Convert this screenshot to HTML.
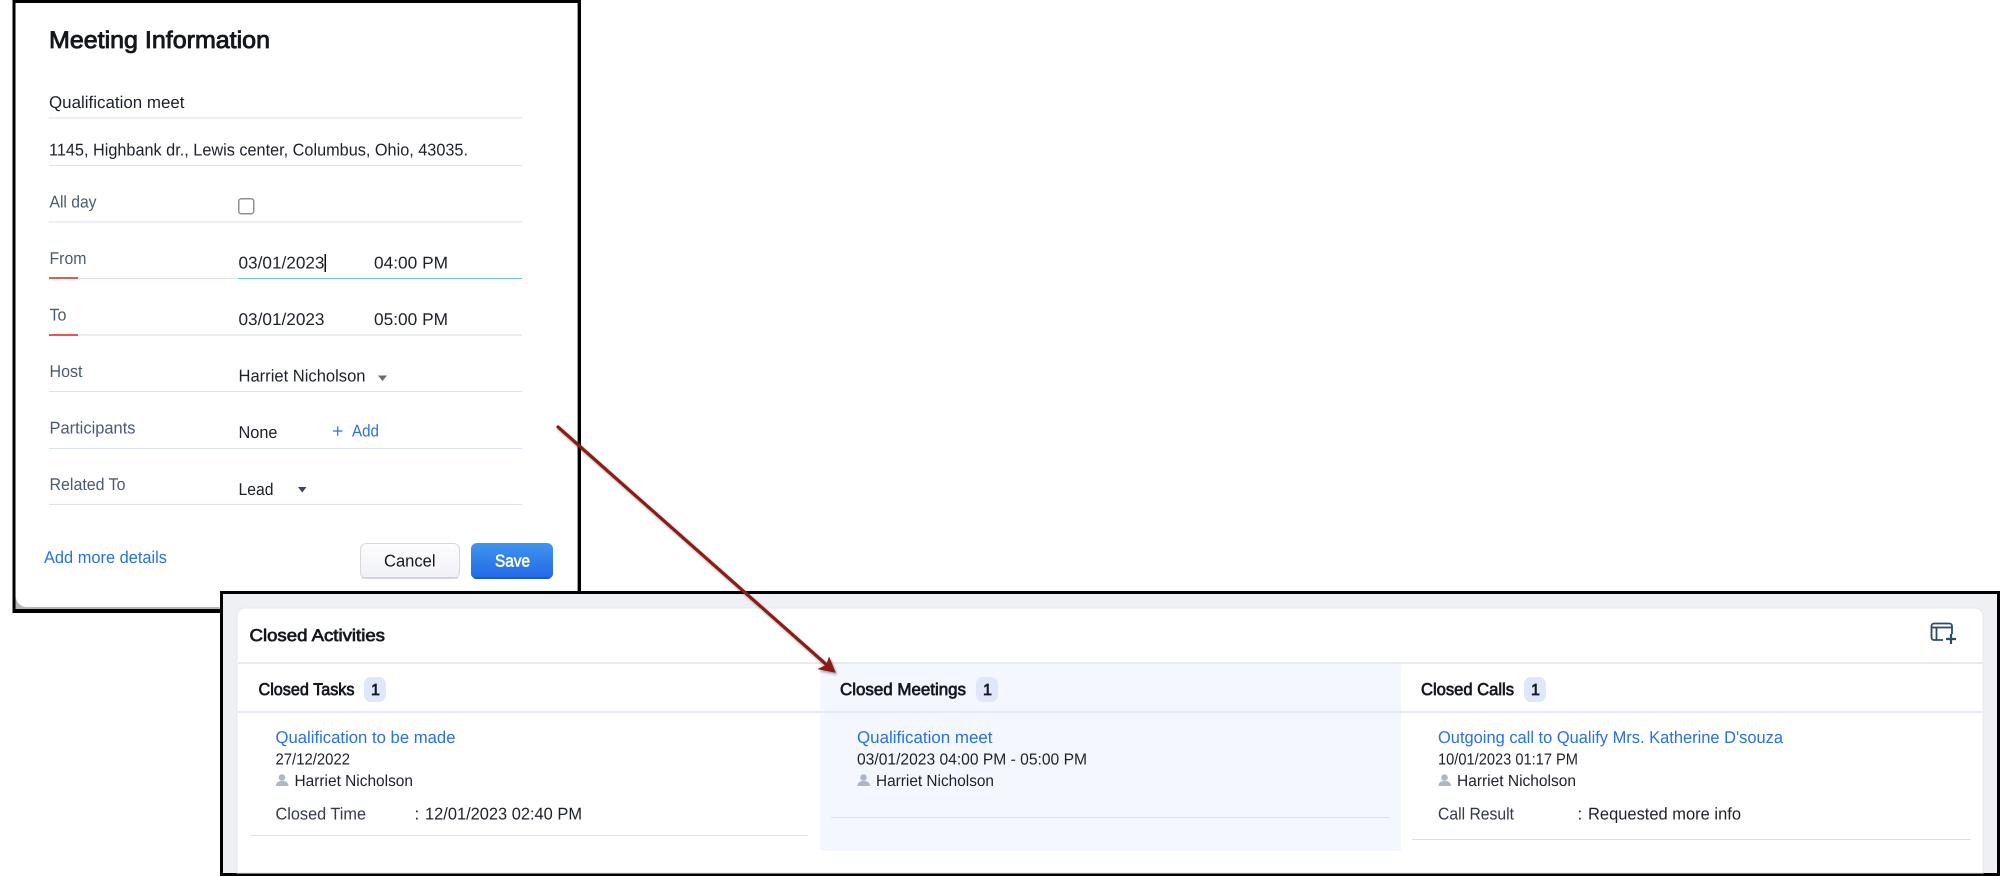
<!DOCTYPE html>
<html lang="en">
<head>
<meta charset="utf-8">
<title>Meeting Information and Closed Activities</title>
<style>
html,body{margin:0;padding:0;background:#fff;width:2000px;height:876px;overflow:hidden}
svg{display:block}
text{font-family:"Liberation Sans",sans-serif;font-size:17px;fill:#1d2129;text-rendering:geometricPrecision}
.s{font-size:16px}
.l{fill:#4b5a75}
.b{fill:#2a70e8}
.h{fill:#14171d;stroke:#14171d;stroke-width:.7px}
</style>
</head>
<body>
<svg width="2000" height="876" viewBox="0 0 2000 876" xmlns="http://www.w3.org/2000/svg">
<defs>
<linearGradient id="gs" x1="0" y1="0" x2="0" y2="1"><stop offset="0" stop-color="#3f95ee"/><stop offset="1" stop-color="#2468e6"/></linearGradient>
<linearGradient id="gc" x1="0" y1="0" x2="0" y2="1"><stop offset="0" stop-color="#fdfdfe"/><stop offset="1" stop-color="#f0f1f6"/></linearGradient>
<filter id="sh" x="-10%" y="-10%" width="120%" height="120%"><feDropShadow dx="1.500" dy="2" stdDeviation="1.200" flood-color="#000" flood-opacity=".35"/></filter>
</defs>

<!-- Left panel -->
<rect x="12.500" y="0" width="568.500" height="613" fill="#000"/>
<rect x="15.500" y="3" width="562.500" height="606" fill="#fff"/>
<path d="M15.500 597Q18 607 27 607H578V609H15.500Z" fill="#b4b6b9"/>
<rect x="577" y="3" width="1" height="606" fill="#9a9a9a"/>

<text x="49" y="48" class="h" textLength="221" lengthAdjust="spacingAndGlyphs" style="font-size:24px;stroke-width:.85px">Meeting Information</text>

<text x="49" y="108" textLength="135.500" lengthAdjust="spacingAndGlyphs">Qualification meet</text>
<rect x="49" y="117" width="473" height="2" fill="#edf0f4"/>
<text x="49" y="155.500" textLength="419" lengthAdjust="spacingAndGlyphs">1145, Highbank dr., Lewis center, Columbus, Ohio, 43035.</text>
<rect x="49" y="165" width="473" height="1" fill="#dde3ec"/>

<text x="49.500" y="207.500" class="l" textLength="47" lengthAdjust="spacingAndGlyphs">All day</text>
<rect x="238.750" y="198.750" width="15" height="15" rx="2.500" fill="#fff" stroke="#8d9096" stroke-width="1.500"/>
<rect x="49" y="221" width="473" height="2" fill="#edf0f4"/>

<text x="49.500" y="264" class="l" textLength="37" lengthAdjust="spacingAndGlyphs">From</text>
<text x="238.500" y="268.500" textLength="86" lengthAdjust="spacingAndGlyphs">03/01/2023</text>
<rect x="324.500" y="254" width="1.500" height="18" fill="#111"/>
<text x="374" y="268.500" textLength="74" lengthAdjust="spacingAndGlyphs">04:00 PM</text>
<rect x="49" y="278" width="189" height="1" fill="#dde3ec"/>
<rect x="238" y="278" width="284" height="1" fill="#6cc0ea"/>
<rect x="49" y="277" width="29" height="2" fill="#e8584f"/>

<text x="49.500" y="320.500" class="l" textLength="17" lengthAdjust="spacingAndGlyphs">To</text>
<text x="238.500" y="325" textLength="86" lengthAdjust="spacingAndGlyphs">03/01/2023</text>
<text x="374" y="325" textLength="74" lengthAdjust="spacingAndGlyphs">05:00 PM</text>
<rect x="49" y="334" width="473" height="2" fill="#e9edf2"/>
<rect x="49" y="334" width="29" height="2" fill="#e8584f"/>

<text x="49.500" y="377" class="l" textLength="33" lengthAdjust="spacingAndGlyphs">Host</text>
<text x="238.500" y="381.500" textLength="127" lengthAdjust="spacingAndGlyphs">Harriet Nicholson</text>
<path d="M378 375.500H387L382.500 381Z" fill="#666b73"/>
<rect x="49" y="391" width="473" height="1" fill="#dde3ec"/>

<text x="49.500" y="433.500" class="l" textLength="86" lengthAdjust="spacingAndGlyphs">Participants</text>
<text x="238.500" y="438" textLength="39" lengthAdjust="spacingAndGlyphs">None</text>
<path d="M333 431H342.500M337.750 426.250V435.750" stroke="#2a70e8" stroke-width="1.200" fill="none"/>
<text x="352" y="436.500" class="b" textLength="27" lengthAdjust="spacingAndGlyphs">Add</text>
<rect x="49" y="448" width="473" height="1" fill="#dde3ec"/>

<text x="49.500" y="490" class="l" textLength="76" lengthAdjust="spacingAndGlyphs">Related To</text>
<text x="238.500" y="495" textLength="35" lengthAdjust="spacingAndGlyphs">Lead</text>
<path d="M298 487H306.500L302.250 492.500Z" fill="#34495f"/>
<rect x="49" y="504" width="473" height="1" fill="#dde3ec"/>

<text x="44" y="563" class="b" textLength="123" lengthAdjust="spacingAndGlyphs">Add more details</text>

<rect x="360.500" y="543.500" width="99" height="35" rx="6" fill="url(#gc)" stroke="#d5d8e2"/>
<rect x="362" y="577" width="96" height="1.500" fill="#cfd2dc"/>
<text x="384" y="566.500" textLength="51.500" lengthAdjust="spacingAndGlyphs" style="fill:#15171c">Cancel</text>
<rect x="471" y="543" width="82" height="36" rx="6" fill="url(#gs)"/>
<path d="M471 573a6 6 0 0 0 6 6H547a6 6 0 0 0 6-6V575a4 4 0 0 1-4 2H475a4 4 0 0 1-4-2Z" fill="#1b57c9"/>
<text x="495" y="566.500" textLength="35" lengthAdjust="spacingAndGlyphs" style="fill:#fff;stroke:#fff;stroke-width:.6px">Save</text>

<!-- Closed activities panel -->
<rect x="220" y="591" width="1780" height="285" fill="#000"/>
<rect x="223" y="594" width="1774" height="279" fill="#eef0f4"/>
<path d="M237 873V616a8 8 0 0 1 8-8H1975a8 8 0 0 1 8 8V873Z" fill="#fff" stroke="#e6e8ed" stroke-width="1"/>

<rect x="820" y="664" width="581" height="187" fill="#f4f7fe"/>
<rect x="238" y="662" width="1745" height="2" fill="#e6e9ee"/>
<rect x="238" y="711" width="1745" height="2" fill="#e6ebf3"/>

<text x="249.500" y="641" class="h" textLength="135.500" lengthAdjust="spacingAndGlyphs">Closed Activities</text>
<path d="M1943 640H1934a2.500 2.500 0 0 1-2.500-2.500V626a2.500 2.500 0 0 1 2.500-2.500H1949.500a2.500 2.500 0 0 1 2.500 2.500V634M1931.500 627.500H1952M1936.500 627.500V640" fill="none" stroke="#2a4a68" stroke-width="1.800"/>
<path d="M1951 634V644M1946 639H1956" fill="none" stroke="#2a4a68" stroke-width="2.200"/>

<!-- Column 1 -->
<text x="258.500" y="695" class="h" textLength="96" lengthAdjust="spacingAndGlyphs">Closed Tasks</text>
<rect x="364" y="677" width="22" height="25" rx="7" fill="#dfe7fb"/>
<text x="371" y="695" class="h" style="font-size:16px">1</text>
<text x="275.500" y="743" class="b" textLength="180" lengthAdjust="spacingAndGlyphs">Qualification to be made</text>
<text x="275.500" y="764.500" class="s" textLength="74.500" lengthAdjust="spacingAndGlyphs">27/12/2022</text>
<g fill="#adb7c9"><circle cx="282" cy="777.500" r="3.300"/><path d="M276 786C276 782 279 781 282 781S288.500 782 288.500 786Z"/></g>
<text x="294.500" y="786" class="s" textLength="118.500" lengthAdjust="spacingAndGlyphs">Harriet Nicholson</text>
<text x="275.500" y="819.500" textLength="90.500" lengthAdjust="spacingAndGlyphs" style="fill:#33394a">Closed Time</text>
<text x="414.500" y="819.500">:</text>
<text x="425" y="819.500" textLength="157" lengthAdjust="spacingAndGlyphs">12/01/2023 02:40 PM</text>
<rect x="250" y="835" width="558" height="1" fill="#dbe3ee"/>

<!-- Column 2 -->
<text x="840" y="695" class="h" textLength="126" lengthAdjust="spacingAndGlyphs">Closed Meetings</text>
<rect x="976" y="677" width="22" height="25" rx="7" fill="#dfe7fb"/>
<text x="983" y="695" class="h" style="font-size:16px">1</text>
<text x="857" y="743" class="b" textLength="135.500" lengthAdjust="spacingAndGlyphs">Qualification meet</text>
<text x="857" y="764.500" class="s" textLength="230" lengthAdjust="spacingAndGlyphs">03/01/2023 04:00 PM - 05:00 PM</text>
<g fill="#adb7c9"><circle cx="863.500" cy="777.500" r="3.300"/><path d="M857.500 786C857.500 782 860.500 781 863.500 781S870 782 870 786Z"/></g>
<text x="876" y="786" class="s" textLength="118" lengthAdjust="spacingAndGlyphs">Harriet Nicholson</text>
<rect x="831" y="817" width="559" height="1" fill="#dde2ea"/>

<!-- Column 3 -->
<text x="1421" y="695" class="h" textLength="93" lengthAdjust="spacingAndGlyphs">Closed Calls</text>
<rect x="1524" y="677" width="22" height="25" rx="7" fill="#dfe7fb"/>
<text x="1531" y="695" class="h" style="font-size:16px">1</text>
<text x="1438" y="743" class="b" textLength="345" lengthAdjust="spacingAndGlyphs">Outgoing call to Qualify Mrs. Katherine D'souza</text>
<text x="1438" y="764.500" class="s" textLength="140" lengthAdjust="spacingAndGlyphs">10/01/2023 01:17 PM</text>
<g fill="#adb7c9"><circle cx="1444.500" cy="777.500" r="3.300"/><path d="M1438.500 786C1438.500 782 1441.500 781 1444.500 781S1451 782 1451 786Z"/></g>
<text x="1457" y="786" class="s" textLength="119" lengthAdjust="spacingAndGlyphs">Harriet Nicholson</text>
<text x="1438" y="819.500" textLength="76" lengthAdjust="spacingAndGlyphs" style="fill:#33394a">Call Result</text>
<text x="1577.500" y="819.500">:</text>
<text x="1588" y="819.500" textLength="153" lengthAdjust="spacingAndGlyphs">Requested more info</text>
<rect x="1412" y="839" width="559" height="1" fill="#dde2ea"/>

<!-- Arrow -->
<g filter="url(#sh)">
<path d="M558 427L828 666" stroke="#8a1a12" stroke-width="3.200" fill="none" stroke-linecap="round"/>
<path d="M835.500 672.500L818 669L826.500 665L829 657Z" fill="#8a1a12" stroke="#8a1a12" stroke-width=".5"/>
</g>
</svg>
</body>
</html>
